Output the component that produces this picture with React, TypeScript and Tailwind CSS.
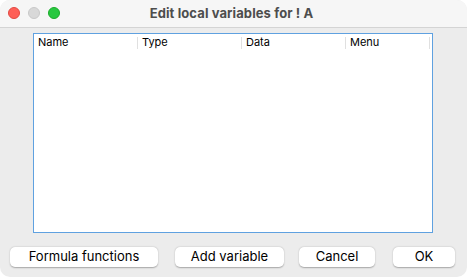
import React from "react";

export default function App() {
  const font = { fontFamily: "Inter, 'Liberation Sans', sans-serif" };
  const cols = ["Name", "Type", "Data", "Menu"];
  return (
    <div className="w-[467px] h-[277px] bg-white" style={font}>
      <div className="w-[467px] h-[277px] rounded-[10px] bg-[#ececec] overflow-hidden flex flex-col">
        <div className="h-[28px] shrink-0 bg-[#f6f6f6] border-b border-[#d4d4d4] relative flex items-center justify-center">
          <div className="absolute left-[8px] top-[7px] flex gap-[8px]">
            <div className="w-[12px] h-[12px] rounded-full bg-[#fe5f57] border border-[#e14942]" />
            <div className="w-[12px] h-[12px] rounded-full bg-[#d8d8d8] border border-[#c8c8c8]" />
            <div className="w-[12px] h-[12px] rounded-full bg-[#28c840] border border-[#1aab29]" />
          </div>
          <span className="text-[13px] font-bold text-[#4d4d4d] tracking-[0.1px] -ml-[4px]">Edit local variables for ! A</span>
        </div>
        <div className="pl-[33px] pt-[5px]">
          <div className="w-[400px] h-[200px] bg-white border border-[#5fa1e0]">
            <div className="flex h-[16px] items-center pt-[1px]">
              {cols.map((c, i) => (
                <div
                  key={c}
                  className={`h-[12px] flex items-center pl-[4px] text-[11px] text-black leading-none ${i < 3 ? "w-[104px]" : "w-[84px]"} border-r border-[#e0e0e0]`}
                >
                  {c}
                </div>
              ))}
            </div>
          </div>
        </div>
        <div className="flex items-center pt-[14px] pl-[10px]">
          <button className="w-[148px] h-[20px] pb-[1px] bg-white rounded-[5px] shadow-[0_0.5px_1.5px_rgba(0,0,0,0.3)] text-[13px] text-black leading-none">Formula functions</button>
          <button className="ml-[17px] w-[109px] h-[20px] pb-[1px] bg-white rounded-[5px] shadow-[0_0.5px_1.5px_rgba(0,0,0,0.3)] text-[13px] text-black leading-none">Add variable</button>
          <button className="ml-[15px] w-[76px] h-[20px] pb-[1px] bg-white rounded-[5px] shadow-[0_0.5px_1.5px_rgba(0,0,0,0.3)] text-[13px] text-black leading-none">Cancel</button>
          <button className="ml-[18px] w-[62px] h-[20px] pb-[1px] bg-white rounded-[5px] shadow-[0_0.5px_1.5px_rgba(0,0,0,0.3)] text-[13px] text-black leading-none">OK</button>
        </div>
      </div>
    </div>
  );
}
